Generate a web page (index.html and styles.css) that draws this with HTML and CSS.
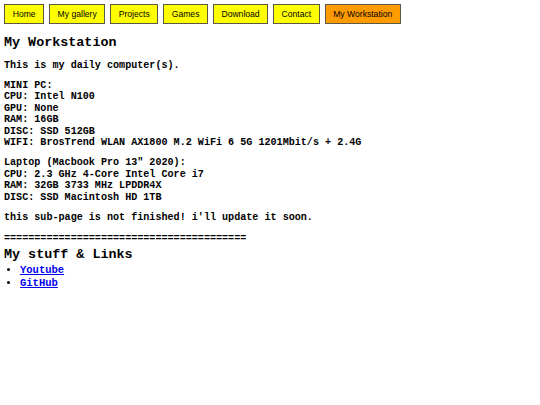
FILE: index.html
```html
<!DOCTYPE html>
<html>
<head>
<meta charset="utf-8">
<title>My Workstation</title>
<link rel="stylesheet" href="styles.css">
</head>
<body>
<nav class="nav">
  <a class="btn" href="#">Home</a>
  <a class="btn" href="#">My gallery</a>
  <a class="btn" href="#">Projects</a>
  <a class="btn" href="#">Games</a>
  <a class="btn" href="#">Download</a>
  <a class="btn" href="#">Contact</a>
  <a class="btn active" href="#">My Workstation</a>
</nav>
<h1 class="title">My Workstation</h1>
<p class="para">This is my daily computer(s).</p>
<p class="para">MINI PC:<br>CPU: Intel N100<br>GPU: None<br>RAM: 16GB<br>DISC: SSD 512GB<br>WIFI: BrosTrend WLAN AX1800 M.2 WiFi 6 5G 1201Mbit/s + 2.4G</p>
<p class="para">Laptop (Macbook Pro 13" 2020):<br>CPU: 2.3 GHz 4-Core Intel Core i7<br>RAM: 32GB 3733 MHz LPDDR4X<br>DISC: SSD Macintosh HD 1TB</p>
<p class="para">this sub-page is not finished! i'll update it soon.</p>
<p class="para sep">========================================</p>
<h2 class="title sub">My stuff &amp; Links</h2>
<ul class="links">
  <li><a href="#">Youtube</a></li>
  <li><a href="#">GitHub</a></li>
</ul>
</body>
</html>
```

FILE: styles.css
```css
body {
  margin: 0;
  padding: 4px;
  font-family: "Courier New", "Liberation Mono", monospace;
  font-weight: bold;
  color: #000;
  background: #fff;
}
.nav {
  display: flex;
  gap: 4.6px;
  align-items: stretch;
}
.btn {
  display: block;
  font-family: "Liberation Sans", Arial, sans-serif;
  font-weight: normal;
  font-size: 8.6px;
  line-height: 18px;
  padding: 0 7.7px;
  background: #ffff00;
  color: #000;
  text-decoration: none;
  border: 1.5px solid #5a5a45;
}
.btn.active {
  background: #ff9a00;
}
.title {
  font-size: 13.4px;
  margin: 10.5px 0 10px 0;
}
.para {
  font-size: 10.1px;
  line-height: 11.4px;
  margin: 9px 0;
}
.sep {
  margin: 10px 0 0 0;
}
.sub {
  margin: 2.5px 0 2px 0;
}
.links {
  margin: 0;
  padding-left: 16px;
  font-size: 10.5px;
  line-height: 13px;
}
.links a {
  color: #0000ee;
}
```
